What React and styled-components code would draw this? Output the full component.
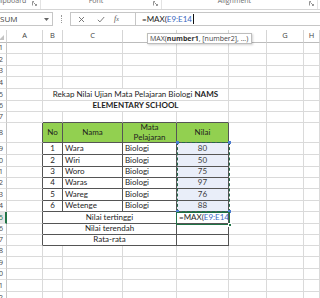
import React from "react";
import styled, { createGlobalStyle } from "styled-components";

const UI_FONT = `"Open Sans", "Noto Sans", sans-serif`;
const CELL_FONT = `Lato, "Open Sans", sans-serif`;
const GRID = "#dadada";
const DARK = "#555";
const GREEN = "#217346";
const REF_BLUE = "#3a68c0";

const GlobalStyle = createGlobalStyle`
  html, body { margin: 0; padding: 0; background: #fff; }
  #root { width: 320px; height: 298px; overflow: hidden; }
`;

// sheet rows: index 0 is the column header strip
const ROWS = [13, 11, 12, 11, 12, 12, 11, 11, 20, 12, 12, 11, 11, 12, 11, 12, 11, 11, 11, 12, 11, 12, 12];
const COLS = [22, 36, 20, 60, 54, 52, 38, 37];
const LETTERS = ["", "A", "B", "C", "D", "E", "F", "G", "H"];
const ACTIVE_ROW = 15;

const isTable = (r, c) => r >= 8 && r <= 17 && c >= 2 && c <= 5;

const Window = styled.div`
  position: relative;
  width: 320px;
  height: 298px;
  overflow: hidden;
  display: flex;
  flex-direction: column;
  background: #fff;
`;

const Ribbon = styled.div`
  flex: none;
  height: 9px;
  display: flex;
  margin-left: -9px;
  border-bottom: 1px solid #d5d5d5;
  overflow: hidden;
`;

const Group = styled.div`
  flex: none;
  width: ${p => p.$w}px;
  display: flex;
  align-items: flex-end;
  border-right: 1px solid #e3e3e3;
`;

const GroupLabel = styled.span`
  flex: 1;
  height: 12px;
  margin-bottom: 2px;
  text-align: center;
  font: 400 7px/12px ${UI_FONT};
  color: #6a6a6a;
  white-space: nowrap;
`;

const Launcher = styled.svg`
  flex: none;
  width: 5px;
  height: 5px;
  margin: 0 3px 3px 2px;
`;

const FormulaBar = styled.div`
  flex: none;
  height: 20px;
  display: flex;
  align-items: flex-start;
  padding-top: 2px;
  box-sizing: border-box;
`;

const NameBox = styled.div`
  flex: none;
  width: 56px;
  height: 14px;
  margin-left: -3px;
  box-sizing: border-box;
  border: 1px solid #c6c6c6;
  display: flex;
  align-items: center;
  justify-content: space-between;
  padding: 0 3px 0 2px;
  font: 400 8px/1 ${UI_FONT};
  color: #444;
`;

const Grip = styled.span`
  flex: none;
  width: 0;
  height: 8px;
  margin: 3px 8px 0 8px;
  border-left: 1px dotted #9a9a9a;
`;

const FxButtons = styled.div`
  flex: none;
  width: 65px;
  height: 14px;
  box-sizing: border-box;
  border: 1px solid #c6c6c6;
  border-right: none;
  display: flex;
  align-items: center;
  padding-left: 7px;
  gap: 12px;
`;

const FxGlyph = styled.span`
  font: italic 400 8px/1 "Liberation Serif", serif;
  color: #555;
  margin-left: -3px;
  & small { font-size: 6px; }
`;

const FormulaInput = styled.div`
  flex: 1;
  height: 14px;
  margin-right: -4px;
  box-sizing: border-box;
  border: 1px solid #c6c6c6;
  display: flex;
  align-items: center;
  padding-left: 6px;
  font: 400 8px/1 ${CELL_FONT};
  color: #222;
  white-space: nowrap;
`;

const Ref = styled.span`
  color: ${REF_BLUE};
`;

const Caret = styled.span`
  display: inline-block;
  width: 1px;
  height: 10px;
  margin-left: 1px;
  background: #111;
`;

const Sheet = styled.div`
  position: relative;
  flex: none;
  margin-left: -15px;
  display: grid;
  grid-template-columns: ${COLS.map(w => w + "px").join(" ")} 1fr;
  grid-template-rows: ${ROWS.map(h => h + "px").join(" ")};
`;

const Cell = styled.div`
  grid-row: ${p => p.$r + 1};
  grid-column: ${p => p.$c + 1} / span ${p => p.$span || 1};
  box-sizing: border-box;
  min-width: 0;
  border-right: 1px solid ${p => (p.$dr ? DARK : GRID)};
  border-bottom: 1px solid ${p => (p.$db ? DARK : GRID)};
  background: ${p => p.$bg || "#fff"};
  display: flex;
  align-items: center;
  justify-content: ${p => (p.$align === "center" ? "center" : "flex-start")};
  text-align: ${p => p.$align || "left"};
  padding: 0 2px;
  overflow: hidden;
  white-space: ${p => (p.$wrap ? "normal" : "nowrap")};
  font: ${p => (p.$bold ? 700 : 400)} 8px/9.5px ${CELL_FONT};
  color: ${p => p.$color || "#1e1e1e"};
  & b { font-weight: 700; }
`;

const ColHead = styled.div`
  grid-row: 1;
  grid-column: ${p => p.$c + 1};
  position: relative;
  box-sizing: border-box;
  border-right: 1px solid #d5d5d5;
  border-bottom: 1px solid #bcbcbc;
  display: flex;
  align-items: center;
  justify-content: center;
  font: 400 7.5px/1 ${UI_FONT};
  color: #444;
  background: #fff;
`;

const Corner = styled(ColHead)`
  &::after {
    content: "";
    position: absolute;
    right: 2px;
    bottom: 2px;
    border-left: 5px solid transparent;
    border-bottom: 5px solid #c3c3c3;
  }
`;

const RowHead = styled.div`
  grid-row: ${p => p.$r + 1};
  grid-column: 1;
  box-sizing: border-box;
  border-right: ${p => (p.$active ? `2px solid ${GREEN}` : "1px solid #c6c6c6")};
  border-bottom: 1px solid #e1e1e1;
  background: ${p => (p.$active ? "#e8e8e8" : "#fff")};
  display: flex;
  align-items: center;
  justify-content: flex-end;
  padding-right: ${p => (p.$active ? 2 : 3)}px;
  font: 400 7.5px/1 ${UI_FONT};
  color: ${p => (p.$active ? GREEN : "#4a4a4a")};
`;

const RefRange = styled.div`
  grid-row: 10 / 16;
  grid-column: 6;
  position: relative;
  z-index: 2;
  margin: -1px -1px 0 0;
  border: 1px dashed #23694a;
  pointer-events: none;
`;

const Handle = styled.span`
  position: absolute;
  width: 3px;
  height: 3px;
  background: #4a7bd0;
  ${p => (p.$top ? "top: -2px;" : "bottom: -2px;")}
  ${p => (p.$left ? "left: -2px;" : "right: -2px;")}
`;

const ActiveCell = styled.div`
  grid-row: 16;
  grid-column: 6;
  position: relative;
  z-index: 3;
  margin: 0 -1px -1px -1px;
  border: 1px solid ${GREEN};
  pointer-events: none;
  &::after {
    content: "";
    position: absolute;
    right: -3px;
    bottom: -3px;
    width: 4px;
    height: 4px;
    background: ${GREEN};
    border: 1px solid #fff;
    box-sizing: border-box;
  }
`;

const Tooltip = styled.div`
  position: absolute;
  left: 147px;
  top: 33px;
  z-index: 5;
  height: 11px;
  box-sizing: border-box;
  padding: 0 3px 0 2px;
  border: 1px solid #bdbdbd;
  background: #fff;
  box-shadow: 1px 1px 2px rgba(0, 0, 0, 0.18);
  display: flex;
  align-items: center;
  font: 400 7px/1 ${UI_FONT};
  color: #444;
  white-space: nowrap;
  & b { font-weight: 700; color: #333; }
`;

const VALUE_BG = "#e9eef9";
const names = ["Wara", "Wiri", "Woro", "Waras", "Wareg", "Wetenge"];
const values = [80, 50, 75, 97, 76, 88];

const buildCells = () => {
  const spec = {
    "5-2": { span: 4, align: "center", content: <>Rekap Nilai Ujian Mata Pelajaran Biologi <b>NAMS</b></> },
    "6-2": { span: 4, align: "center", bold: true, content: "ELEMENTARY SCHOOL" },
    "8-2": { align: "center", bg: "#92d050", content: "No" },
    "8-3": { align: "center", bg: "#92d050", content: "Nama" },
    "8-4": { align: "center", bg: "#92d050", wrap: true, content: "Mata Pelajaran" },
    "8-5": { align: "center", bg: "#92d050", content: "Nilai" },
    "15-2": { span: 3, align: "center", content: "Nilai tertinggi" },
    "15-5": { content: <>=MAX(<Ref>E9:E14</Ref></> },
    "16-2": { span: 3, align: "center", content: "Nilai terendah" },
    "17-2": { span: 3, align: "center", content: "Rata-rata" },
  };
  names.forEach((n, i) => {
    const r = 9 + i;
    spec[`${r}-2`] = { align: "center", content: i + 1 };
    spec[`${r}-3`] = { content: n };
    spec[`${r}-4`] = { content: "Biologi" };
    spec[`${r}-5`] = { align: "center", bg: VALUE_BG, color: "#3c3c3c", content: values[i] };
  });

  const out = [];
  const covered = new Set();
  for (let r = 0; r < ROWS.length; r++) {
    for (let c = 0; c < LETTERS.length; c++) {
      if (r === 0) {
        out.push(c === 0
          ? <Corner key="corner" $c={0} />
          : <ColHead key={`h${c}`} $c={c}>{LETTERS[c]}</ColHead>);
        continue;
      }
      if (c === 0) {
        out.push(<RowHead key={`r${r}`} $r={r} $active={r === ACTIVE_ROW}>{r}</RowHead>);
        continue;
      }
      const key = `${r}-${c}`;
      if (covered.has(key)) continue;
      const s = spec[key] || {};
      const span = s.span || 1;
      const last = c + span - 1;
      let db = false;
      for (let k = c; k <= last; k++) {
        if (k > c) covered.add(`${r}-${k}`);
        if (isTable(r, k) || isTable(r + 1, k)) db = true;
      }
      const dr = isTable(r, last) || isTable(r, last + 1);
      out.push(
        <Cell key={key} $r={r} $c={c} $span={span} $dr={dr} $db={db}
          $align={s.align} $bold={s.bold} $bg={s.bg} $wrap={s.wrap} $color={s.color}>
          {s.content !== undefined && <span>{s.content}</span>}
        </Cell>
      );
    }
  }
  return out;
};

const LauncherIcon = () => (
  <Launcher viewBox="0 0 5 5">
    <path d="M0.5 4.5V0.5H2M4.5 3V4.5H3M1.5 1.5L4.2 4.2" stroke="#7a7a7a" strokeWidth="0.8" fill="none" />
  </Launcher>
);

export default function App() {
  return (
    <Window>
      <GlobalStyle />
      <Ribbon>
        <Group $w={49}><GroupLabel>Clipboard</GroupLabel><LauncherIcon /></Group>
        <Group $w={120}><GroupLabel>Font</GroupLabel><LauncherIcon /></Group>
        <Group $w={155}><GroupLabel>Alignment</GroupLabel><LauncherIcon /></Group>
      </Ribbon>
      <FormulaBar>
        <NameBox>
          <span>SUM</span>
          <svg width="5" height="3" viewBox="0 0 5 3"><path d="M0 0H5L2.5 3Z" fill="#666" /></svg>
        </NameBox>
        <Grip />
        <FxButtons>
          <svg width="7" height="7" viewBox="0 0 7 7">
            <path d="M1 1L6 6M6 1L1 6" stroke="#6b6b6b" strokeWidth="0.9" />
          </svg>
          <svg width="8" height="7" viewBox="0 0 8 7">
            <path d="M0.8 3.8L2.9 5.9L7.2 1" stroke="#6b6b6b" strokeWidth="0.9" fill="none" />
          </svg>
          <FxGlyph>f<small>x</small></FxGlyph>
        </FxButtons>
        <FormulaInput>
          <span>=MAX(<Ref>E9:E14</Ref></span><Caret />
        </FormulaInput>
      </FormulaBar>
      <Sheet>
        {buildCells()}
        <RefRange>
          <Handle $top $left />
          <Handle $top />
          <Handle $left />
          <Handle />
        </RefRange>
        <ActiveCell />
      </Sheet>
      <Tooltip>MAX(<b>number1</b>, [number2], ...)</Tooltip>
    </Window>
  );
}
